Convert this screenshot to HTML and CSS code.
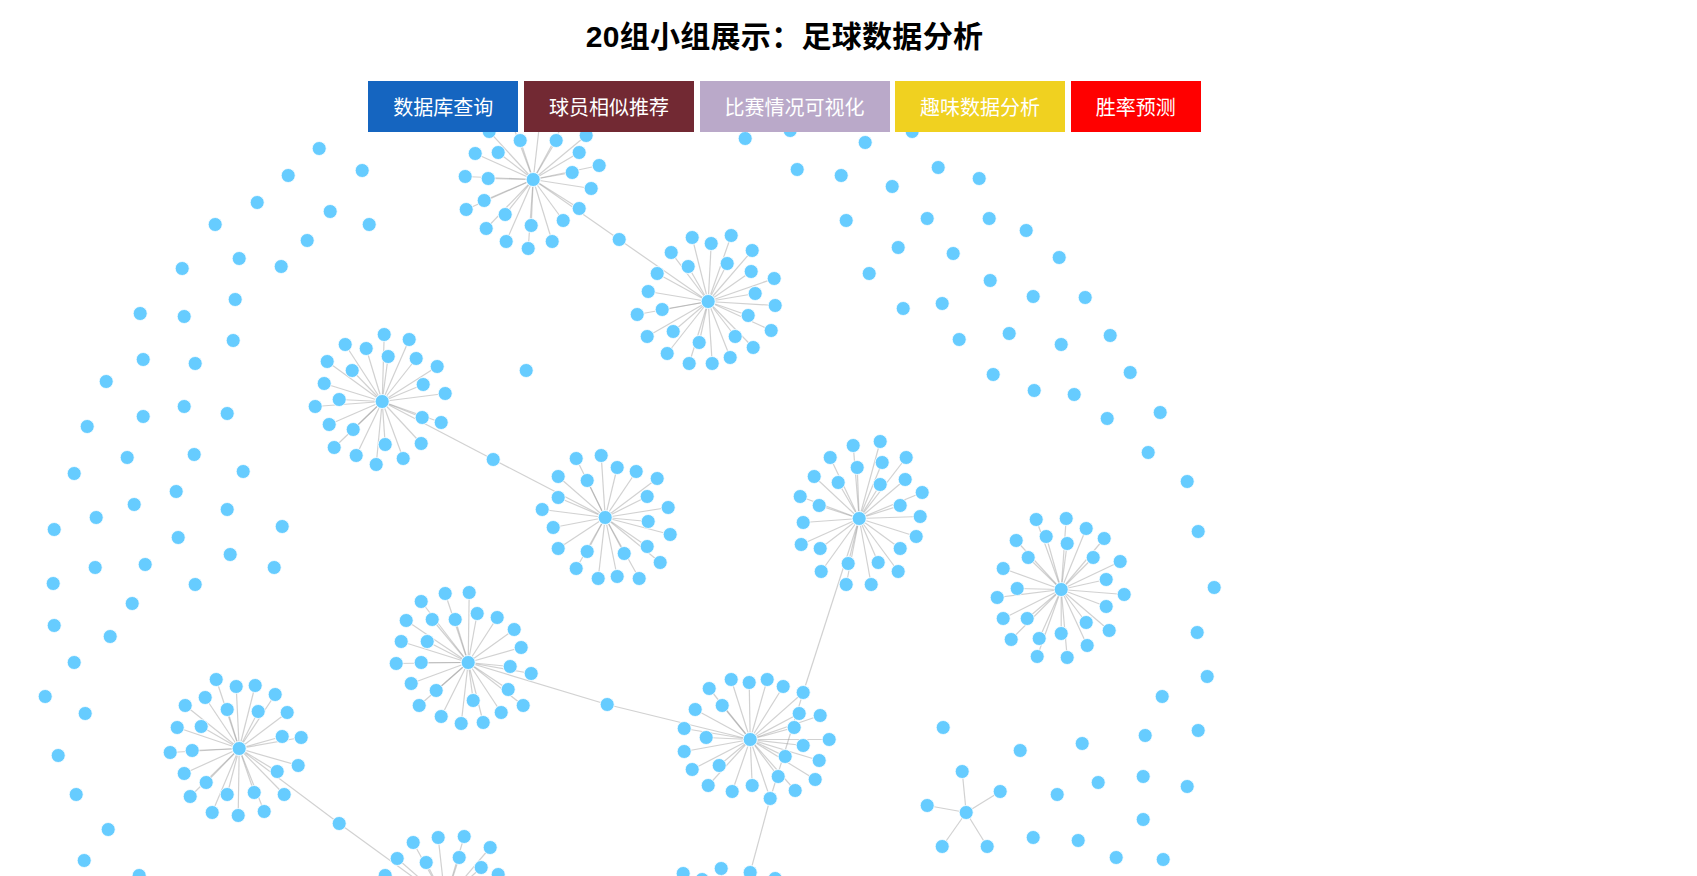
FILE: index.html
```html
<!DOCTYPE html>
<html lang="zh-CN">
<head>
    <meta charset="UTF-8">
    <meta name="viewport" content="width=device-width, initial-scale=1.0">
    <title>20组小组展示：足球数据分析</title>
    <link rel="stylesheet" href="styles.css">
</head>
<body>
    <header>
        <h1>20组小组展示：足球数据分析</h1>
        <nav class="button-container">
            <a class="btn btn-blue" href="#">数据库查询</a>
            <a class="btn btn-maroon" href="#">球员相似推荐</a>
            <a class="btn btn-lilac" href="#">比赛情况可视化</a>
            <a class="btn btn-yellow" href="#">趣味数据分析</a>
            <a class="btn btn-red" href="#">胜率预测</a>
        </nav>
    </header>

    <svg id="graph" viewBox="-0.2 131.5 1697 744"></svg>

    <script src="graph.js"></script>
</body>
</html>
```

FILE: styles.css
```css
* {
    margin: 0;
    padding: 0;
    box-sizing: border-box;
}
body {
    font-family: "Liberation Sans", "Noto Sans CJK SC", sans-serif;
    background-color: #fff;
    height: 876px;
    overflow: hidden;
}
header {
    width: 1569px;
    text-align: center;
}
h1 {
    padding-top: 17px;
    margin-bottom: 24px;
    font-size: 30px;
    line-height: 40px;
    letter-spacing: 0.3px;
    color: #000;
}
.button-container {
    display: flex;
    justify-content: center;
    gap: 5.6px;
}
.btn {
    padding: 3px 25px 0;
    font-size: 20px;
    line-height: 48px;
    color: #fff;
    text-decoration: none;
}
.btn-blue { background: #1565c0; }
.btn-maroon { background: #722933; }
.btn-lilac { background: #baa9c9; }
.btn-yellow { background: #f0d120; }
.btn-red { background: #ff0000; }
#graph {
    display: block;
    width: 1697px;
    height: 744px;
}
#graph line {
    stroke: #999;
    stroke-opacity: 0.45;
    stroke-width: 1.2;
}
#graph circle {
    fill: #66ccff;
    stroke: #fff;
    stroke-width: 0.8;
}
```

FILE: graph.js
```js
// player groups: centre point, then the nodes linked to it
const groups = [
    { c: [239, 748], leaves: [[216,679],[236,686],[255,685],[275,694],[287,712],[301,737],[282,736],[298,765],[277,771],[284,794],[264,811],[254,792],[238,815],[227,794],[212,812],[190,796],[206,782],[184,773],[170,752],[192,750],[177,727],[201,726],[185,705],[205,697],[227,709],[258,711]] },
    { c: [533, 179], leaves: [[489,131],[520,140],[556,140],[586,135],[579,152],[599,165],[572,172],[591,188],[579,208],[563,220],[552,241],[531,225],[528,248],[506,241],[486,228],[505,214],[484,200],[466,209],[488,178],[465,176],[475,153],[498,152],[540,118],[566,118],[510,118]] },
    { c: [382, 401], leaves: [[384,334],[409,339],[345,344],[366,348],[388,356],[416,358],[327,361],[352,370],[437,366],[423,384],[324,383],[339,399],[315,406],[445,393],[329,424],[422,417],[441,422],[353,429],[334,447],[421,443],[356,455],[385,444],[403,458],[376,464]] },
    { c: [708, 301], leaves: [[692,237],[711,243],[731,235],[752,250],[671,252],[688,266],[727,263],[751,271],[657,273],[774,278],[648,291],[755,293],[775,305],[662,309],[637,314],[748,315],[771,330],[647,336],[673,331],[735,336],[753,347],[699,342],[667,353],[730,357],[689,363],[712,363]] },
    { c: [605, 517], leaves: [[601,455],[576,458],[617,467],[636,471],[558,476],[587,480],[657,478],[558,497],[647,496],[542,509],[668,507],[648,521],[553,527],[670,534],[558,548],[587,551],[647,546],[624,553],[660,562],[576,568],[598,578],[617,576],[639,578]] },
    { c: [859, 518], leaves: [[880,441],[853,445],[830,457],[906,457],[882,462],[857,467],[814,476],[905,479],[838,482],[880,484],[922,492],[800,496],[819,505],[900,505],[920,516],[803,522],[801,544],[916,536],[820,548],[900,548],[848,563],[878,562],[821,571],[898,571],[846,584],[871,584]] },
    { c: [1061, 589], leaves: [[1036,519],[1066,518],[1086,528],[1016,540],[1046,536],[1067,543],[1104,538],[1028,557],[1093,557],[1120,561],[1003,568],[1106,579],[1017,588],[997,597],[1124,594],[1106,606],[1003,618],[1027,618],[1086,622],[1109,630],[1011,639],[1039,638],[1061,633],[1087,645],[1037,656],[1067,657]] },
    { c: [468, 662], leaves: [[469,592],[445,593],[421,601],[477,613],[455,619],[432,619],[497,617],[406,620],[514,629],[401,641],[427,641],[521,647],[396,663],[421,662],[510,666],[531,673],[411,683],[436,690],[508,689],[523,705],[419,705],[473,700],[501,712],[441,716],[483,722],[461,723]] },
    { c: [750, 739], leaves: [[731,679],[749,682],[767,679],[709,688],[783,686],[803,692],[722,705],[799,713],[820,715],[695,709],[794,727],[684,728],[706,737],[829,739],[803,745],[684,751],[785,756],[819,760],[692,769],[719,765],[815,779],[778,776],[708,785],[732,791],[752,785],[795,790],[770,798]] },
    { c: [966, 812], leaves: [[962,771],[1000,791],[927,805],[942,846],[987,846]] },
    { c: [445, 900], leaves: [[413,842],[438,837],[464,836],[490,847],[459,857],[426,862],[481,867],[498,874],[397,858],[385,875]] },
    { c: [725, 930], leaves: [[683,873],[721,868],[750,872],[775,878],[702,879]] }
];

// chains that join one group to the next
const bridges = [
    [[239,748],[339,823],[445,900]],
    [[533,179],[619,239],[708,301]],
    [[382,401],[493,459],[605,517]],
    [[468,662],[607,704],[750,739]],
    [[859,518],[803,692],[770,798],[750,872]]
];

// nodes with no links
const loose = [
    [319,148],[362,170],[288,175],[257,202],[330,211],[215,224],[369,224],[307,240],[239,258],[281,266],
    [182,268],[235,299],[140,313],[184,316],[233,340],[143,359],[195,363],[106,381],[143,416],[184,406],
    [227,413],[87,426],[127,457],[194,454],[74,473],[243,471],[176,491],[134,504],[227,509],[96,517],
    [282,526],[54,529],[178,537],[230,554],[95,567],[145,564],[274,567],[53,583],[195,584],[132,603],
    [54,625],[110,636],[74,662],[45,696],[85,713],[58,755],[76,794],[108,829],[84,860],[139,875],
    [526,370],[745,138],[790,130],[865,142],[912,131],[797,169],[841,175],[892,186],[938,167],[979,178],
    [846,220],[927,218],[989,218],[1026,230],[898,247],[953,253],[1059,257],[869,273],[990,280],[1033,296],
    [1085,297],[942,303],[903,308],[959,339],[1009,333],[1061,344],[1110,335],[1130,372],[993,374],[1034,390],
    [1074,394],[1107,418],[1160,412],[1148,452],[1187,481],[1198,531],[1214,587],[1197,632],[1207,676],[1162,696],
    [943,727],[1082,743],[1020,750],[1145,735],[1198,730],[1143,776],[1098,782],[1057,794],[1187,786],[1143,819],
    [1033,837],[1078,840],[1116,857],[1163,859]
];

const svg = document.getElementById('graph');

function add(tag, attrs) {
    const el = document.createElementNS('http://www.w3.org/2000/svg', tag);
    for (const key in attrs) el.setAttribute(key, attrs[key]);
    svg.appendChild(el);
}

function link(a, b) {
    add('line', { x1: a[0], y1: a[1], x2: b[0], y2: b[1] });
}

function node(p) {
    add('circle', { cx: p[0], cy: p[1], r: 7 });
}

groups.forEach(g => g.leaves.forEach(leaf => link(g.c, leaf)));
bridges.forEach(chain => chain.slice(1).forEach((p, i) => link(chain[i], p)));

groups.forEach(g => {
    node(g.c);
    g.leaves.forEach(node);
});
bridges.forEach(chain => chain.forEach(node));
loose.forEach(node);
```
